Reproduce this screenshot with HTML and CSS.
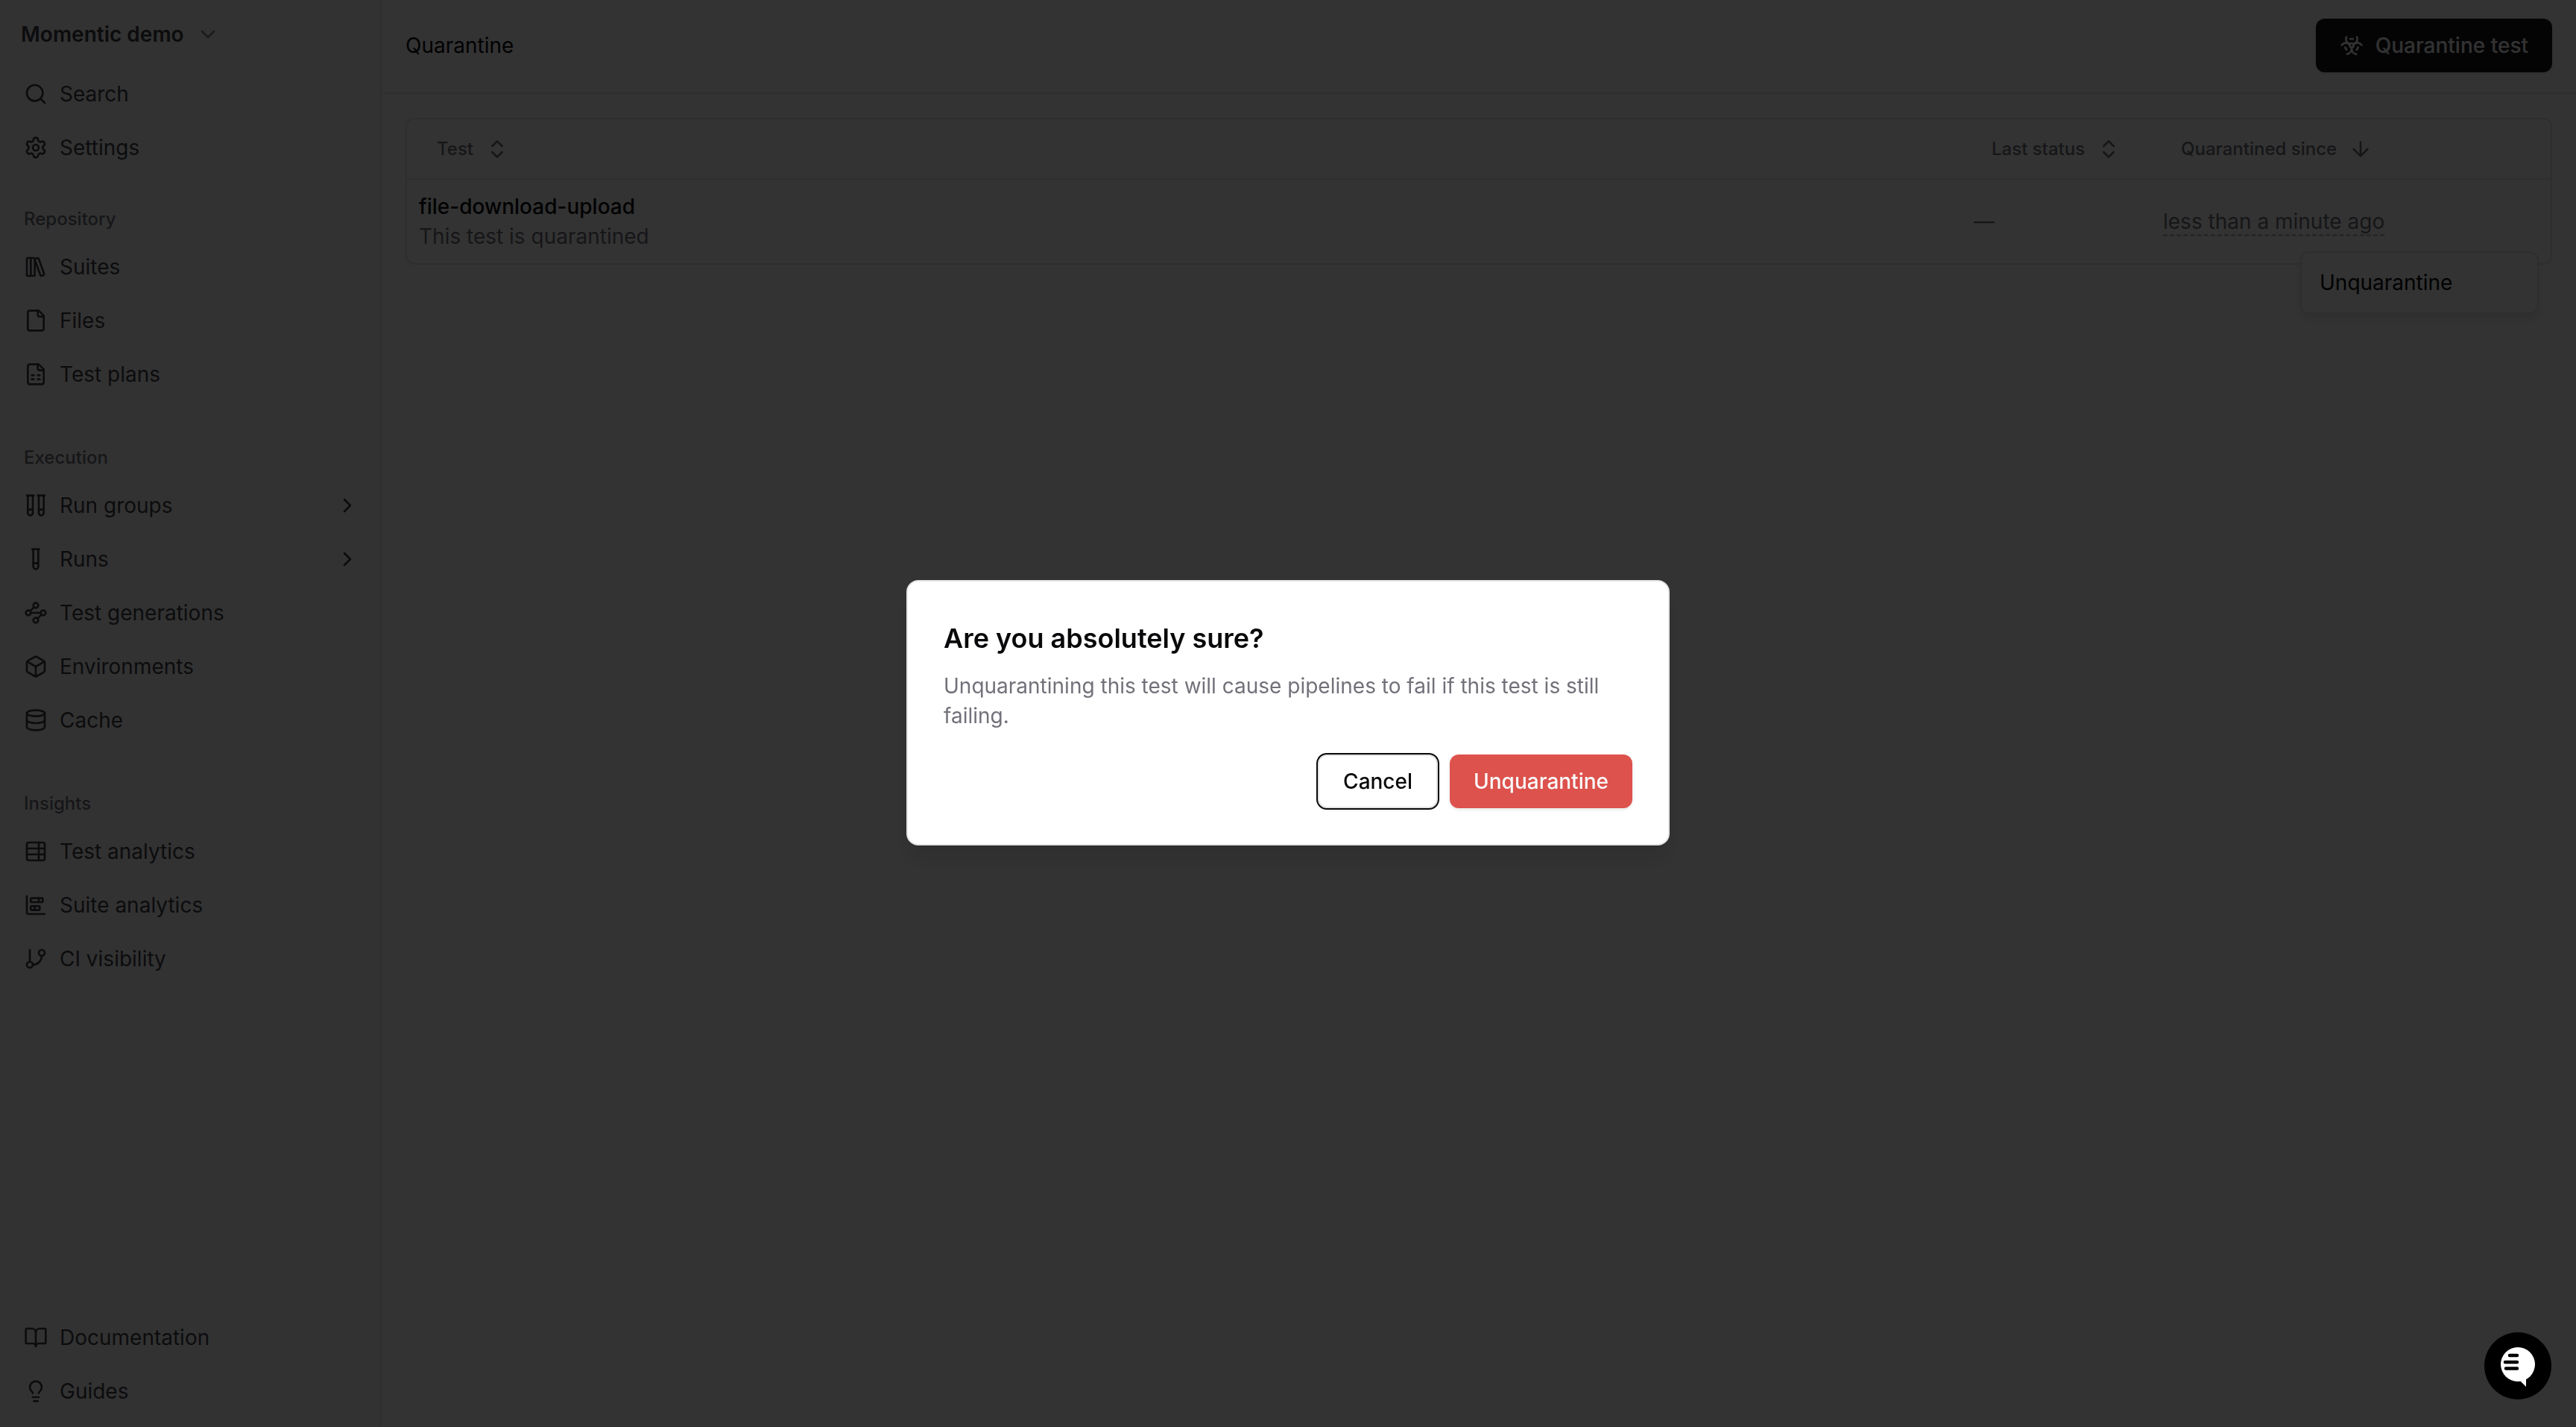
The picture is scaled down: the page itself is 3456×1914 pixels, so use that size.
FILE: index.html
```html
<!DOCTYPE html>
<html lang="en">
<head>
  <meta charset="UTF-8" />
  <meta name="viewport" content="width=device-width, initial-scale=1" />
  <title>Quarantine - Momentic</title>
  <link rel="stylesheet" href="styles.css">
</head>
<body>
  <div class="app">
    <aside class="sidebar">
      <button class="workspace" type="button">
        Momentic demo
        <svg class="icon" viewBox="0 0 24 24"><path d="m6 9 6 6 6-6"/></svg>
      </button>

      <nav class="nav">
        <a class="nav-item" href="#search">
          <svg class="icon" viewBox="0 0 24 24"><circle cx="11" cy="11" r="8"/><path d="m21 21-4.3-4.3"/></svg>
          Search
        </a>
        <a class="nav-item" href="#settings">
          <svg class="icon" viewBox="0 0 24 24"><path d="M9.671 4.136a2.34 2.34 0 0 1 4.659 0 2.34 2.34 0 0 0 3.319 1.915 2.34 2.34 0 0 1 2.33 4.033 2.34 2.34 0 0 0 0 3.831 2.34 2.34 0 0 1-2.33 4.033 2.34 2.34 0 0 0-3.319 1.915 2.34 2.34 0 0 1-4.659 0 2.34 2.34 0 0 0-3.32-1.915 2.34 2.34 0 0 1-2.33-4.033 2.34 2.34 0 0 0 0-3.831A2.34 2.34 0 0 1 6.35 6.051a2.34 2.34 0 0 0 3.319-1.915"/><circle cx="12" cy="12" r="3"/></svg>
          Settings
        </a>
      </nav>

      <nav class="nav-groups">
        <section class="nav-group">
          <h2>Repository</h2>
          <a class="nav-item" href="#suites">
            <svg class="icon" viewBox="0 0 24 24"><rect width="8" height="18" x="3" y="3" rx="1"/><path d="M7 3v18"/><path d="M20.4 18.9c.2.5-.1 1.1-.6 1.3l-1.9.7c-.5.2-1.1-.1-1.3-.6L11.1 5.1c-.2-.5.1-1.1.6-1.3l1.9-.7c.5-.2 1.1.1 1.3.6Z"/></svg>
            Suites
          </a>
          <a class="nav-item" href="#files">
            <svg class="icon" viewBox="0 0 24 24"><path d="M15 2H6a2 2 0 0 0-2 2v16a2 2 0 0 0 2 2h12a2 2 0 0 0 2-2V7Z"/><path d="M14 2v4a2 2 0 0 0 2 2h4"/></svg>
            Files
          </a>
          <a class="nav-item" href="#plans">
            <svg class="icon" viewBox="0 0 24 24"><path d="M15 2H6a2 2 0 0 0-2 2v16a2 2 0 0 0 2 2h12a2 2 0 0 0 2-2V7Z"/><path d="M14 2v4a2 2 0 0 0 2 2h4"/><path d="M8 13h2M14 13h2M8 17h2M14 17h2"/></svg>
            Test plans
          </a>
        </section>

        <section class="nav-group">
          <h2>Execution</h2>
          <a class="nav-item" href="#run-groups">
            <svg class="icon" viewBox="0 0 24 24"><path d="M9 2v17.5A2.5 2.5 0 0 1 6.5 22 2.5 2.5 0 0 1 4 19.5V2"/><path d="M20 2v17.5a2.5 2.5 0 0 1-2.5 2.5 2.5 2.5 0 0 1-2.5-2.5V2"/><path d="M3 2h7M14 2h7M9 16H4M20 16h-5"/></svg>
            Run groups
            <svg class="icon expand" viewBox="0 0 24 24"><path d="m9 18 6-6-6-6"/></svg>
          </a>
          <a class="nav-item" href="#runs">
            <svg class="icon" viewBox="0 0 24 24"><path d="M14.5 2v17.5c0 1.4-1.1 2.5-2.5 2.5s-2.5-1.1-2.5-2.5V2"/><path d="M8.5 2h7M14.5 16h-5"/></svg>
            Runs
            <svg class="icon expand" viewBox="0 0 24 24"><path d="m9 18 6-6-6-6"/></svg>
          </a>
          <a class="nav-item" href="#generations">
            <svg class="icon" viewBox="0 0 24 24"><circle cx="12" cy="4.5" r="2.5"/><path d="m10.2 6.3-3.9 3.9"/><circle cx="4.5" cy="12" r="2.5"/><path d="M7 12h10"/><circle cx="19.5" cy="12" r="2.5"/><path d="m13.8 17.7 3.9-3.9"/><circle cx="12" cy="19.5" r="2.5"/></svg>
            Test generations
          </a>
          <a class="nav-item" href="#environments">
            <svg class="icon" viewBox="0 0 24 24"><path d="M21 8a2 2 0 0 0-1-1.73l-7-4a2 2 0 0 0-2 0l-7 4A2 2 0 0 0 3 8v8a2 2 0 0 0 1 1.73l7 4a2 2 0 0 0 2 0l7-4A2 2 0 0 0 21 16Z"/><path d="m3.3 7 8.7 5 8.7-5"/><path d="M12 22V12"/></svg>
            Environments
          </a>
          <a class="nav-item" href="#cache">
            <svg class="icon" viewBox="0 0 24 24"><ellipse cx="12" cy="5" rx="9" ry="3"/><path d="M3 5v14a9 3 0 0 0 18 0V5"/><path d="M3 12a9 3 0 0 0 18 0"/></svg>
            Cache
          </a>
        </section>

        <section class="nav-group">
          <h2>Insights</h2>
          <a class="nav-item" href="#test-analytics">
            <svg class="icon" viewBox="0 0 24 24"><path d="M15 3v18"/><rect width="18" height="18" x="3" y="3" rx="2"/><path d="M21 9H3M21 15H3"/></svg>
            Test analytics
          </a>
          <a class="nav-item" href="#suite-analytics">
            <svg class="icon" viewBox="0 0 24 24"><path d="M11 13v4M15 5v4M3 3v16a2 2 0 0 0 2 2h16"/><rect x="7" y="13" width="9" height="4" rx="1"/><rect x="7" y="5" width="12" height="4" rx="1"/></svg>
            Suite analytics
          </a>
          <a class="nav-item" href="#ci">
            <svg class="icon" viewBox="0 0 24 24"><path d="M6 3v12"/><circle cx="18" cy="6" r="3"/><circle cx="6" cy="18" r="3"/><path d="M18 9a9 9 0 0 1-9 9"/></svg>
            CI visibility
          </a>
        </section>
      </nav>

      <nav class="nav nav-footer">
        <a class="nav-item" href="#docs">
          <svg class="icon" viewBox="0 0 24 24"><path d="M12 7v14"/><path d="M3 18a1 1 0 0 1-1-1V4a1 1 0 0 1 1-1h5a4 4 0 0 1 4 4 4 4 0 0 1 4-4h5a1 1 0 0 1 1 1v13a1 1 0 0 1-1 1h-6a3 3 0 0 0-3 3 3 3 0 0 0-3-3z"/></svg>
          Documentation
        </a>
        <a class="nav-item" href="#guides">
          <svg class="icon" viewBox="0 0 24 24"><path d="M15 14c.2-1 .7-1.7 1.5-2.5 1-.9 1.5-2.2 1.5-3.5A6 6 0 0 0 6 8c0 1 .2 2.2 1.5 3.5.7.7 1.3 1.5 1.5 2.5"/><path d="M9 18h6M10 22h4"/></svg>
          Guides
        </a>
      </nav>
    </aside>

    <main class="main">
      <header class="page-header">
        <h1>Quarantine</h1>
        <button class="btn btn-primary" type="button">
          <svg class="icon" viewBox="0 0 24 24"><circle cx="12" cy="11.9" r="2"/><path d="M6.7 3.4c-.9 2.5 0 5.2 2.2 6.7C6.5 9 3.7 9.6 2 11.6"/><path d="m8.9 10.1 1.4.8"/><path d="M17.3 3.4c.9 2.5 0 5.2-2.2 6.7 2.4-1.2 5.2-.6 6.9 1.5"/><path d="m15.1 10.1-1.4.8"/><path d="M16.7 20.8c-2.6-.4-4.6-2.6-4.7-5.3-.2 2.6-2.1 4.8-4.7 5.2"/><path d="M12 13.9v1.6"/><path d="M13.5 5.4c-1-.2-2-.2-3 0"/><path d="M17 16.4c.7-.7 1.2-1.6 1.5-2.5"/><path d="M5.5 13.9c.3.9.8 1.8 1.5 2.5"/></svg>
          Quarantine test
        </button>
      </header>

      <div class="content">
        <table class="tests">
          <thead>
            <tr>
              <th>
                <button class="sort" type="button">Test
                  <svg class="icon" viewBox="0 0 24 24"><path d="m7 15 5 5 5-5M7 9l5-5 5 5"/></svg>
                </button>
              </th>
              <th class="col-status">
                <button class="sort" type="button">Last status
                  <svg class="icon" viewBox="0 0 24 24"><path d="m7 15 5 5 5-5M7 9l5-5 5 5"/></svg>
                </button>
              </th>
              <th class="col-since">
                <button class="sort" type="button">Quarantined since
                  <svg class="icon" viewBox="0 0 24 24"><path d="M12 5v14M19 12l-7 7-7-7"/></svg>
                </button>
              </th>
            </tr>
          </thead>
          <tbody>
            <tr>
              <td>
                <div class="test-name">file-download-upload</div>
                <div class="muted">This test is quarantined</div>
              </td>
              <td class="muted">—</td>
              <td class="row-actions">
                <span class="since">less than a minute ago</span>
                <div class="menu" role="menu">
                  <button class="menu-item" type="button" role="menuitem">Unquarantine</button>
                </div>
              </td>
            </tr>
          </tbody>
        </table>
      </div>
    </main>
  </div>

  <div class="overlay">
    <div class="dialog" role="alertdialog" aria-modal="true" aria-labelledby="dialog-title" aria-describedby="dialog-text">
      <h2 id="dialog-title">Are you absolutely sure?</h2>
      <p id="dialog-text">Unquarantining this test will cause pipelines to fail if this test is still failing.</p>
      <div class="dialog-footer">
        <button class="btn btn-outline" type="button">Cancel</button>
        <button class="btn btn-danger" type="button">Unquarantine</button>
      </div>
    </div>
  </div>

  <button class="chat" type="button" aria-label="Open chat">
    <svg viewBox="0 0 90 90">
      <circle cx="45" cy="43" r="23" fill="#fff"/>
      <path d="M47 64 56 73V60Z" fill="#fff"/>
      <path d="M34 31h10M28 40h16M29 48.500h15" stroke="#000" stroke-width="4.500" stroke-linecap="round"/>
    </svg>
  </button>
</body>
</html>
```

FILE: styles.css
```css
* {
  box-sizing: border-box;
}

body {
  margin: 0;
  background: #fff;
  color: #09090b;
  font-family: Inter, "Liberation Sans", sans-serif;
  font-size: 28px;
  line-height: 40px;
}

h1, h2, p {
  margin: 0;
}

button {
  font: inherit;
  color: inherit;
  background: none;
  border: none;
  padding: 0;
  cursor: pointer;
}

.icon {
  width: 32px;
  height: 32px;
  flex: none;
  fill: none;
  stroke: currentColor;
  stroke-width: 2;
  stroke-linecap: round;
  stroke-linejoin: round;
}

.muted {
  color: #71717a;
}

.app {
  display: flex;
  min-height: 100vh;
}

/* Sidebar */
.sidebar {
  width: 512px;
  flex: none;
  display: flex;
  flex-direction: column;
  padding-bottom: 12px;
  background: #fafafa;
  border-right: 2px solid #e4e4e7;
  color: #3f3f46;
}

.workspace {
  display: flex;
  align-items: center;
  gap: 16px;
  height: 90px;
  padding: 2px 28px 0;
  font-weight: 600;
}

.workspace .icon {
  opacity: 0.6;
}

.nav-groups {
  display: flex;
  flex-direction: column;
  gap: 48px;
  margin-top: 32px;
}

.nav-group h2 {
  padding: 8px 32px;
  font-size: 24px;
  font-weight: 500;
  color: #71717a;
}

.nav-item {
  display: flex;
  align-items: center;
  gap: 16px;
  height: 72px;
  padding: 0 28px 0 32px;
  color: inherit;
  text-decoration: none;
}

.nav-item .expand {
  margin-left: auto;
}

.nav-footer {
  margin-top: auto;
}

/* Main area */
.main {
  flex: 1;
  min-width: 0;
}

.page-header {
  display: flex;
  align-items: center;
  justify-content: space-between;
  height: 126px;
  padding: 0 32px 2px;
  border-bottom: 2px solid #e4e4e7;
}

.page-header h1 {
  font-size: 28px;
  font-weight: 400;
}

.content {
  padding: 32px;
}

.btn {
  display: flex;
  align-items: center;
  gap: 16px;
  height: 72px;
  padding: 0 32px;
  border-radius: 12px;
  font-weight: 500;
  box-shadow: 0 2px 4px rgba(0, 0, 0, 0.1);
}

.btn-primary {
  background: #18181b;
  color: #fafafa;
}

.btn-outline {
  background: #fff;
  border: 2px solid #e4e4e7;
  outline: 2px solid #09090b;
}

.btn-danger {
  background: #dd524c;
  color: #fafafa;
}

/* Table */
.tests {
  width: 100%;
  border: 2px solid #e4e4e7;
  border-radius: 12px;
  border-spacing: 0;
  table-layout: fixed;
}

.tests th {
  height: 81px;
  padding: 0 16px;
  border-bottom: 2px solid #e4e4e7;
  text-align: left;
}

.tests td {
  padding: 16px;
}

.col-status {
  width: 254px;
}

.col-since {
  width: 536px;
}

.sort {
  display: flex;
  align-items: center;
  gap: 16px;
  padding: 0 24px;
  font-size: 24px;
  font-weight: 500;
  color: #71717a;
  white-space: nowrap;
}

.test-name {
  font-weight: 500;
}

.since {
  color: #71717a;
  border-bottom: 3px dashed #c4c4c8;
}

.row-actions {
  position: relative;
}

.menu {
  position: absolute;
  top: 96px;
  right: 16px;
  width: 320px;
  padding: 8px;
  background: #fff;
  border: 2px solid #e4e4e7;
  border-radius: 12px;
  box-shadow: 0 8px 12px rgba(0, 0, 0, 0.1);
}

.menu-item {
  width: 100%;
  padding: 12px 16px;
  text-align: left;
}

/* Confirm dialog */
.overlay {
  position: fixed;
  inset: 0;
  display: flex;
  align-items: center;
  justify-content: center;
  padding-bottom: 2px;
  background: rgba(0, 0, 0, 0.8);
}

.dialog {
  width: 1024px;
  padding: 48px;
  background: #fff;
  border: 2px solid #e4e4e7;
  border-radius: 16px;
  box-shadow: 0 20px 30px rgba(0, 0, 0, 0.1);
}

.dialog h2 {
  font-size: 36px;
  font-weight: 600;
  line-height: 56px;
}

.dialog p {
  margin-top: 16px;
  color: #71717a;
}

.dialog-footer {
  display: flex;
  justify-content: flex-end;
  gap: 16px;
  margin-top: 32px;
}

/* Chat launcher */
.chat {
  position: fixed;
  right: 33px;
  bottom: 37px;
  width: 90px;
  height: 90px;
  border-radius: 50%;
  background: #000;
}

.chat svg {
  display: block;
}
```
